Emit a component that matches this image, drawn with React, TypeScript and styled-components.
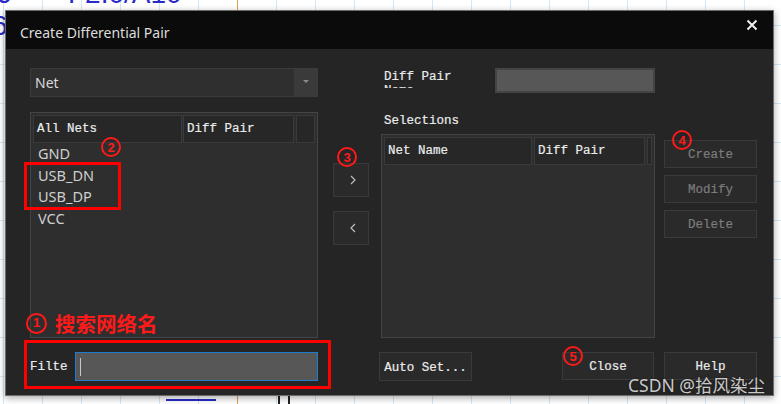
import React from "react";
import styled, { createGlobalStyle } from "styled-components";

const GlobalStyle = createGlobalStyle`
  html, body {
    margin: 0;
    padding: 0;
  }
  body {
    width: 781px;
    height: 404px;
    overflow: hidden;
    background-color: #ffffff;
    background-image:
      linear-gradient(90deg, #d3e7f5 1px, transparent 1px),
      linear-gradient(#d3e7f5 1px, transparent 1px);
    background-size: 39px 39px;
    background-position: 3px 25px;
    font-family: "Noto Sans", "Noto Sans CJK SC", sans-serif;
  }
`;

const Canvas = styled.div`
  position: relative;
  width: 781px;
  height: 404px;
  overflow: hidden;
`;

const CanvasText = styled.div<{ $x: number; $y: number }>`
  position: absolute;
  left: ${(p) => p.$x}px;
  top: ${(p) => p.$y}px;
  font-family: "Liberation Sans", sans-serif;
  font-size: 28px;
  line-height: 28px;
  color: #2a2ac8;
  white-space: nowrap;
`;

const Wire = styled.div<{ $x: number; $y: number; $w: number; $h: number; $c: string }>`
  position: absolute;
  left: ${(p) => p.$x}px;
  top: ${(p) => p.$y}px;
  width: ${(p) => p.$w}px;
  height: ${(p) => p.$h}px;
  background: ${(p) => p.$c};
`;

const Dialog = styled.div`
  position: absolute;
  left: 5px;
  top: 10px;
  width: 769px;
  height: 386px;
  box-sizing: border-box;
  border: 1px solid #6c6c6c;
  background: #252525;
  box-shadow: 0 2px 7px rgba(0, 0, 0, 0.35);
  display: flex;
  flex-direction: column;
`;

const TitleBar = styled.div`
  height: 38px;
  flex: none;
  background: #0b0b0b;
  display: flex;
  justify-content: space-between;
`;

const Title = styled.div`
  align-self: center;
  padding: 5px 0 0 14px;
  font-family: "Noto Sans", sans-serif;
  font-size: 14px;
  color: #dcdcdc;
`;

const CloseX = styled.svg`
  margin: 8px 15px 0 0;
  width: 12px;
  height: 12px;
`;

const Body = styled.div`
  flex: 1;
  display: flex;
  padding: 19px 16px 0 24px;
`;

const LeftCol = styled.div`
  width: 288px;
  display: flex;
  flex-direction: column;
`;

const MidCol = styled.div`
  width: 36px;
  margin-left: 15px;
  padding-top: 95px;
  display: flex;
  flex-direction: column;
  gap: 14px;
`;

const RightCol = styled.div`
  width: 376px;
  margin-left: 12px;
  display: flex;
  flex-direction: column;
`;

const Combo = styled.div`
  height: 29px;
  box-sizing: border-box;
  border: 1px solid #3b3b3b;
  background: #2f2f2f;
  display: flex;
`;

const ComboText = styled.div`
  flex: 1;
  padding-left: 4px;
  display: flex;
  align-items: center;
  font-family: "Noto Sans", sans-serif;
  font-size: 14px;
  color: #dadada;
`;

const ComboArrow = styled.div`
  width: 23px;
  background: #3a3a3a;
  display: flex;
  align-items: center;
  justify-content: center;
  &::after {
    content: "";
    border-left: 3px solid transparent;
    border-right: 3px solid transparent;
    border-top: 3px solid #8a8a8a;
    margin-top: -2px;
  }
`;

const Mono = styled.span<{ $dim?: boolean }>`
  font-family: "Liberation Mono", monospace;
  font-size: 12.5px;
  color: ${(p) => (p.$dim ? "#7c7c7c" : "#ececec")};
  -webkit-text-stroke: 0.2px currentColor;
  white-space: nowrap;
`;

const Table = styled.div<{ $h: number; $mt: number }>`
  height: ${(p) => p.$h}px;
  margin-top: ${(p) => p.$mt}px;
  box-sizing: border-box;
  border: 1px solid #444444;
  background: #2e2e2e;
  padding: 2px;
  display: flex;
  flex-direction: column;
`;

const Header = styled.div<{ $cols: string }>`
  height: 28px;
  display: grid;
  grid-template-columns: ${(p) => p.$cols};
`;

const HeadCell = styled.div`
  box-sizing: border-box;
  border: 1px solid #3a3a3a;
  background: #272727;
  padding-left: 3px;
  display: flex;
  align-items: center;
`;

const Gap = styled.div``;

const NetList = styled.div`
  padding-left: 5px;
  display: flex;
  flex-direction: column;
`;

const NetItem = styled.div`
  height: 21.6px;
  line-height: 21.6px;
  font-family: "Noto Sans", sans-serif;
  font-size: 14.5px;
  color: #cfcfcf;
`;

const FilterRow = styled.div`
  margin-top: 14px;
  height: 29px;
  display: flex;
  align-items: center;
`;

const FilterLabel = styled.div`
  width: 45px;
  margin-top: -5px;
`;

const FilterInput = styled.div`
  flex: 1;
  height: 29px;
  box-sizing: border-box;
  border: 1px solid #1f7bd0;
  background: #575757;
  display: flex;
  align-items: center;
  padding-left: 4px;
  &::before {
    content: "";
    width: 1px;
    height: 18px;
    background: #c8c8c8;
  }
`;

const ArrowBtn = styled.div`
  height: 34px;
  box-sizing: border-box;
  border: 1px solid #393939;
  background: #2a2a2a;
  display: flex;
  align-items: center;
  justify-content: center;
  padding-left: 4px;
`;

const NameRow = styled.div`
  height: 29px;
  display: flex;
`;

const NameLabel = styled.div`
  width: 111px;
  height: 18px;
  margin: 2px 0 0 3px;
  overflow: hidden;
  line-height: 14px;
`;

const NameLabelText = styled(Mono)`
  white-space: normal;
  display: block;
  width: 80px;
`;

const TextInput = styled.div`
  width: 160px;
  height: 25px;
  box-sizing: border-box;
  border: 2px solid #444444;
  background: #575757;
`;

const SectionLabel = styled.div`
  margin: 15px 0 0 3px;
  height: 18px;
  display: flex;
  align-items: center;
`;

const SelectRow = styled.div`
  display: flex;
  margin-top: 4px;
`;

const SideButtons = styled.div`
  margin-left: 9px;
  padding-top: 6px;
  display: flex;
  flex-direction: column;
  gap: 7px;
`;

const Button = styled.div<{ $w?: number; $h?: number; $ml?: number }>`
  width: ${(p) => p.$w ?? 93}px;
  height: ${(p) => p.$h ?? 28}px;
  margin-left: ${(p) => p.$ml ?? 0}px;
  box-sizing: border-box;
  border: 1px solid #3a3a3a;
  background: #2a2a2a;
  display: flex;
  align-items: center;
  justify-content: center;
  padding-top: 2px;
`;

const BottomRow = styled.div`
  margin-top: 14px;
  display: flex;
`;

const Spacer = styled.div`
  flex: 1;
`;

/* red annotations drawn over the dialog */
const RedBox = styled.div<{ $x: number; $y: number; $w: number; $h: number }>`
  position: absolute;
  left: ${(p) => p.$x}px;
  top: ${(p) => p.$y}px;
  width: ${(p) => p.$w}px;
  height: ${(p) => p.$h}px;
  box-sizing: border-box;
  border: 3px solid #ff0000;
`;

const CircleNum = styled.div<{ $x: number; $y: number }>`
  position: absolute;
  left: ${(p) => p.$x - 10}px;
  top: ${(p) => p.$y - 10}px;
  width: 20px;
  height: 20px;
  box-sizing: border-box;
  border: 2.5px solid #ff1a1a;
  border-radius: 50%;
  display: flex;
  align-items: center;
  justify-content: center;
  font-family: "Liberation Sans", sans-serif;
  font-weight: 700;
  font-size: 13px;
  color: #ff1a1a;
`;

const Note = styled.div`
  position: absolute;
  left: 20px;
  top: 301px;
  display: flex;
  align-items: center;
  gap: 8px;
  font-family: "Noto Sans CJK SC", sans-serif;
  font-weight: 700;
  font-size: 20.5px;
  line-height: 22px;
  color: #ff1a1a;
`;

const NoteCircle = styled.div`
  width: 21px;
  height: 21px;
  box-sizing: border-box;
  border: 2.5px solid #ff1a1a;
  border-radius: 50%;
  display: flex;
  align-items: center;
  justify-content: center;
  font-family: "Liberation Sans", sans-serif;
  font-size: 13px;
  font-weight: 700;
`;

const Watermark = styled.div`
  position: absolute;
  left: 622px;
  top: 363px;
  font-family: "Noto Sans", "Noto Sans CJK SC", sans-serif;
  font-size: 17.5px;
  line-height: 22px;
  color: rgba(235, 235, 235, 0.85);
  text-shadow: 0 0 2px rgba(0, 0, 0, 0.6);
  white-space: nowrap;
`;

const Chevron: React.FC<{ dir: "left" | "right" }> = ({ dir }) => (
  <svg width="6" height="10" viewBox="0 0 6 10">
    <polyline
      points={dir === "right" ? "1,1 5,5 1,9" : "5,1 1,5 5,9"}
      fill="none"
      stroke="#bdbdbd"
      strokeWidth="1.2"
    />
  </svg>
);

const nets = ["GND", "USB_DN", "USB_DP", "VCC"];

export default function App() {
  return (
    <Canvas>
      <GlobalStyle />
      <CanvasText $x={-4} $y={-20}>6</CanvasText>
      <CanvasText $x={68} $y={-20}>F2.0/A10</CanvasText>
      <CanvasText $x={-8} $y={12}>6</CanvasText>
      <Wire $x={237} $y={0} $w={1} $h={10} $c="#e0a050" />
      <Wire $x={237} $y={396} $w={1} $h={8} $c="#e0a050" />
      <Wire $x={166} $y={399} $w={50} $h={2} $c="#2a2ac8" />
      <Wire $x={278} $y={396} $w={2} $h={8} $c="#222" />
      <Wire $x={288} $y={396} $w={2} $h={8} $c="#222" />

      <Dialog>
        <TitleBar>
          <Title>Create Differential Pair</Title>
          <CloseX viewBox="0 0 12 12">
            <path d="M1.5 1.5 L10.5 10.5 M10.5 1.5 L1.5 10.5" stroke="#f0f0f0" strokeWidth="2" />
          </CloseX>
        </TitleBar>
        <Body>
          <LeftCol>
            <Combo>
              <ComboText>Net</ComboText>
              <ComboArrow />
            </Combo>
            <Table $h={226} $mt={15}>
              <Header $cols="149px 1px 111px 2px 19px">
                <HeadCell><Mono>All Nets</Mono></HeadCell>
                <Gap />
                <HeadCell><Mono>Diff Pair</Mono></HeadCell>
                <Gap />
                <HeadCell />
              </Header>
              <NetList>
                {nets.map((n) => (
                  <NetItem key={n}>{n}</NetItem>
                ))}
              </NetList>
            </Table>
            <FilterRow>
              <FilterLabel><Mono>Filte</Mono></FilterLabel>
              <FilterInput />
            </FilterRow>
          </LeftCol>

          <MidCol>
            <ArrowBtn><Chevron dir="right" /></ArrowBtn>
            <ArrowBtn><Chevron dir="left" /></ArrowBtn>
          </MidCol>

          <RightCol>
            <NameRow>
              <NameLabel>
                <NameLabelText>Diff Pair Name</NameLabelText>
              </NameLabel>
              <TextInput />
            </NameRow>
            <SectionLabel><Mono>Selections</Mono></SectionLabel>
            <SelectRow>
              <Table $h={204} $mt={0} style={{ width: 274 }}>
                <Header $cols="148px 2px 111px 2px 5px">
                  <HeadCell><Mono>Net Name</Mono></HeadCell>
                  <Gap />
                  <HeadCell><Mono>Diff Pair</Mono></HeadCell>
                  <Gap />
                  <HeadCell />
                </Header>
              </Table>
              <SideButtons>
                <Button><Mono $dim>Create</Mono></Button>
                <Button><Mono $dim>Modify</Mono></Button>
                <Button><Mono $dim>Delete</Mono></Button>
              </SideButtons>
            </SelectRow>
            <BottomRow>
              <Button $h={29} $ml={-2}><Mono>Auto Set...</Mono></Button>
              <Spacer />
              <Button $w={92}><Mono>Close</Mono></Button>
              <Button $ml={10}><Mono>Help</Mono></Button>
            </BottomRow>
          </RightCol>
        </Body>

        <RedBox $x={18} $y={151} $w={97} $h={48} />
        <RedBox $x={18} $y={329} $w={307} $h={49} />
        <Note>
          <NoteCircle>1</NoteCircle>
          <span>搜索网络名</span>
        </Note>
        <CircleNum $x={105} $y={136}>2</CircleNum>
        <CircleNum $x={341} $y={146}>3</CircleNum>
        <CircleNum $x={676} $y={129}>4</CircleNum>
        <CircleNum $x={567} $y={345}>5</CircleNum>
        <Watermark>CSDN @拾风染尘</Watermark>
      </Dialog>
    </Canvas>
  );
}
